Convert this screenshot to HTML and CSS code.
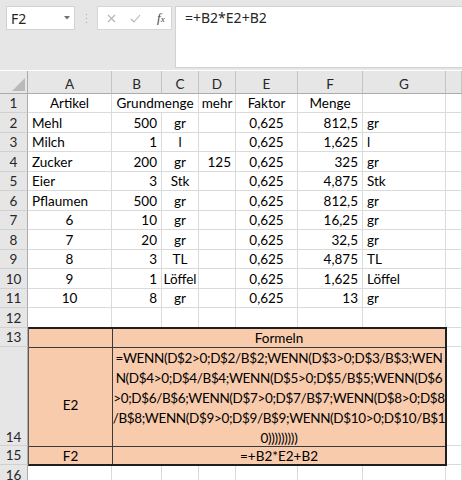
FILE: index.html
```html
<!DOCTYPE html>
<html lang="de">
<head>
<meta charset="utf-8">
<title>Tabelle</title>
<link rel="stylesheet" href="styles.css">
</head>
<body>
<div class="app">
  <div class="toolbar">
    <div class="namebox">
      <span class="nametext">F2</span>
      <svg class="caret" width="6" height="4" viewBox="0 0 6 4"><path d="M0 0H6L3 3.5Z" fill="#707070"/></svg>
    </div>
    <div class="grip">
      <svg width="3" height="11" viewBox="0 0 3 11"><rect x="1" y="1" width="1" height="1" fill="#a6a6a6"/><rect x="1" y="5" width="1" height="1" fill="#a6a6a6"/><rect x="1" y="9" width="1" height="1" fill="#a6a6a6"/></svg>
    </div>
    <div class="fxbox">
      <svg class="ico-x" width="9" height="9" viewBox="0 0 9 9"><path d="M1 1L8 8M8 1L1 8" stroke="#b4b4b4" stroke-width="1.1" fill="none"/></svg>
      <svg class="ico-ok" width="11" height="9" viewBox="0 0 11 9"><path d="M1 5L4 8L10 1" stroke="#b4b4b4" stroke-width="1.1" fill="none"/></svg>
      <span class="fx">f<span class="fxsub">x</span></span>
    </div>
    <div class="formula">=+B2*E2+B2</div>
  </div>

  <div class="sheet">
    <div class="hd corner"><svg width="13" height="13" viewBox="0 0 13 13"><path d="M13 0V13H0Z" fill="#b9b9b9"/></svg></div>
    <div class="hd">A</div><div class="hd">B</div><div class="hd">C</div><div class="hd">D</div><div class="hd">E</div><div class="hd">F</div><div class="hd">G</div><div class="hd"></div>

    <div class="rh">1</div><div class="cell c">Artikel</div><div class="cell c span2">Grundmenge</div><div class="cell c">mehr</div><div class="cell c">Faktor</div><div class="cell c">Menge</div><div class="cell"></div><div class="cell"></div>

    <div class="rh">2</div><div class="cell l">Mehl</div><div class="cell r">500</div><div class="cell c">gr</div><div class="cell r"></div><div class="cell c">0,625</div><div class="cell r">812,5</div><div class="cell l">gr</div><div class="cell"></div>
    <div class="rh">3</div><div class="cell l">Milch</div><div class="cell r">1</div><div class="cell c">l</div><div class="cell r"></div><div class="cell c">0,625</div><div class="cell r">1,625</div><div class="cell l">l</div><div class="cell"></div>
    <div class="rh">4</div><div class="cell l">Zucker</div><div class="cell r">200</div><div class="cell c">gr</div><div class="cell r">125</div><div class="cell c">0,625</div><div class="cell r">325</div><div class="cell l">gr</div><div class="cell"></div>
    <div class="rh">5</div><div class="cell l">Eier</div><div class="cell r">3</div><div class="cell c">Stk</div><div class="cell r"></div><div class="cell c">0,625</div><div class="cell r">4,875</div><div class="cell l">Stk</div><div class="cell"></div>
    <div class="rh">6</div><div class="cell l">Pflaumen</div><div class="cell r">500</div><div class="cell c">gr</div><div class="cell r"></div><div class="cell c">0,625</div><div class="cell r">812,5</div><div class="cell l">gr</div><div class="cell"></div>
    <div class="rh">7</div><div class="cell c">6</div><div class="cell r">10</div><div class="cell c">gr</div><div class="cell r"></div><div class="cell c">0,625</div><div class="cell r">16,25</div><div class="cell l">gr</div><div class="cell"></div>
    <div class="rh">8</div><div class="cell c">7</div><div class="cell r">20</div><div class="cell c">gr</div><div class="cell r"></div><div class="cell c">0,625</div><div class="cell r">32,5</div><div class="cell l">gr</div><div class="cell"></div>
    <div class="rh">9</div><div class="cell c">8</div><div class="cell r">3</div><div class="cell c">TL</div><div class="cell r"></div><div class="cell c">0,625</div><div class="cell r">4,875</div><div class="cell l">TL</div><div class="cell"></div>
    <div class="rh">10</div><div class="cell c">9</div><div class="cell r">1</div><div class="cell c">Löffel</div><div class="cell r"></div><div class="cell c">0,625</div><div class="cell r">1,625</div><div class="cell l">Löffel</div><div class="cell"></div>
    <div class="rh">11</div><div class="cell c">10</div><div class="cell r">8</div><div class="cell c">gr</div><div class="cell r"></div><div class="cell c">0,625</div><div class="cell r">13</div><div class="cell l">gr</div><div class="cell"></div>
    <div class="rh">12</div><div class="cell"></div><div class="cell"></div><div class="cell"></div><div class="cell"></div><div class="cell"></div><div class="cell"></div><div class="cell"></div><div class="cell"></div>

    <div class="rh">13</div><div class="cell"></div>
    <div class="rh bottom">14</div><div class="cell"></div>
    <div class="rh">15</div><div class="cell"></div>
    <div class="rh">16</div><div class="cell"></div><div class="cell"></div><div class="cell"></div><div class="cell"></div><div class="cell"></div><div class="cell"></div><div class="cell"></div><div class="cell"></div>

    <div class="block">
      <div class="bcell bleft"></div>
      <div class="bcell bmain">Formeln</div>
      <div class="bcell bleft blabel">E2</div>
      <div class="bcell bmain bwrap">
        <span class="fline">=WENN(D$2&gt;0;D$2/B$2;WENN(D$3&gt;0;D$3/B$3;WEN</span>
        <span class="fline">N(D$4&gt;0;D$4/B$4;WENN(D$5&gt;0;D$5/B$5;WENN(D$6</span>
        <span class="fline">&gt;0;D$6/B$6;WENN(D$7&gt;0;D$7/B$7;WENN(D$8&gt;0;D$8</span>
        <span class="fline">/B$8;WENN(D$9&gt;0;D$9/B$9;WENN(D$10&gt;0;D$10/B$1</span>
        <span class="fline">0)))))))))</span>
      </div>
      <div class="bcell bleft blast">F2</div>
      <div class="bcell bmain blast">=+B2*E2+B2</div>
    </div>
  </div>
</div>
</body>
</html>
```

FILE: styles.css
```css
* { box-sizing: border-box; }
html, body { margin: 0; padding: 0; }
body {
  width: 462px;
  height: 480px;
  overflow: hidden;
  background: #ffffff;
  font-family: "Lato", "Liberation Sans", sans-serif;
}
.app { width: 462px; height: 480px; overflow: hidden; }

/* toolbar */
.toolbar {
  height: 70px;
  background: #e6e6e6;
  display: flex;
  align-items: flex-start;
  padding: 6px 0 0 6px;
}
.namebox {
  width: 69px;
  height: 24px;
  background: #ffffff;
  border: 1px solid #d2d2d2;
  display: flex;
  align-items: center;
  justify-content: space-between;
  padding: 0 4px 0 4px;
  font-family: "Noto Sans", "Open Sans", sans-serif;
  font-size: 14px;
  color: #262626;
}
.caret { margin-top: -1px; }
.grip {
  width: 22px;
  height: 24px;
  display: flex;
  align-items: center;
  justify-content: center;
}
.fxbox {
  width: 75px;
  height: 24px;
  background: #ffffff;
  border: 1px solid #d6d6d6;
  display: flex;
  align-items: center;
  padding-left: 9px;
  gap: 14px;
}
.fx {
  font-family: "Liberation Serif", serif;
  font-style: italic;
  font-size: 13px;
  color: #444444;
  margin-left: 2px;
}
.fxsub { font-size: 9px; }
.formula {
  flex: 1;
  height: 62px;
  margin-left: 3px;
  background: #ffffff;
  border: 1px solid #d2d2d2;
  border-right: none;
  padding: 1px 9px;
  font-family: "Noto Sans", "Open Sans", sans-serif;
  font-size: 14px;
  line-height: 20px;
  color: #262626;
}

/* sheet */
.sheet {
  display: grid;
  grid-template-columns: 28px 84px 50px 37px 37px 62px 65px 83px 16px;
  grid-template-rows: 23px repeat(6, 19px 20px) 19px 99px 19px 20px;
  margin-top: 1px;
  font-size: 13.5px;
  color: #000000;
}
.hd {
  background: #e6e6e6;
  border-right: 1px solid #c4c4c4;
  border-bottom: 1px solid #ababab;
  display: flex;
  align-items: center;
  justify-content: center;
  padding-top: 4px;
  color: #262626;
}
.corner {
  justify-content: flex-end;
  align-items: flex-end;
  padding: 0 2px 2px 0;
  border-right: 1px solid #ababab;
}
.rh {
  background: #e6e6e6;
  border-right: 1px solid #ababab;
  border-bottom: 1px solid #d0d0d0;
  display: flex;
  align-items: center;
  justify-content: center;
  color: #262626;
}
.rh.bottom { align-items: flex-end; padding-bottom: 0; }
.cell {
  border-right: 1px solid #dadada;
  border-bottom: 1px solid #dadada;
  white-space: nowrap;
  display: flex;
  align-items: center;
  padding: 0 4px;
  min-width: 0;
}
.cell.l { justify-content: flex-start; }
.cell.r { justify-content: flex-end; }
.cell.c { justify-content: center; }
.span2 { grid-column: span 2; }

.block {
  grid-column: 2 / 9;
  grid-row: 14 / 17;
  margin: -1px -1px -1px 0;
  position: relative;
  z-index: 1;
  background: #f8cbad;
  border-top: 2px solid #1f1f1f;
  border-right: 2px solid #1f1f1f;
  border-bottom: 2px solid #1f1f1f;
  border-left: 1px solid #5a5a5a;
  display: grid;
  grid-template-columns: 84px minmax(0, 1fr);
  grid-template-rows: 19px 99px 17px;
}
.bcell {
  display: flex;
  align-items: center;
  justify-content: center;
  white-space: nowrap;
  min-width: 0;
  border-bottom: 1px solid #3a3a3a;
}
.bleft { border-right: 1px solid #3a3a3a; }
.blast { border-bottom: none; }
.blabel { padding-top: 16px; }
.bwrap {
  flex-direction: column;
  justify-content: flex-start;
  align-items: center;
  line-height: 20px;
}
.fline { display: block; letter-spacing: -0.35px; }
```
